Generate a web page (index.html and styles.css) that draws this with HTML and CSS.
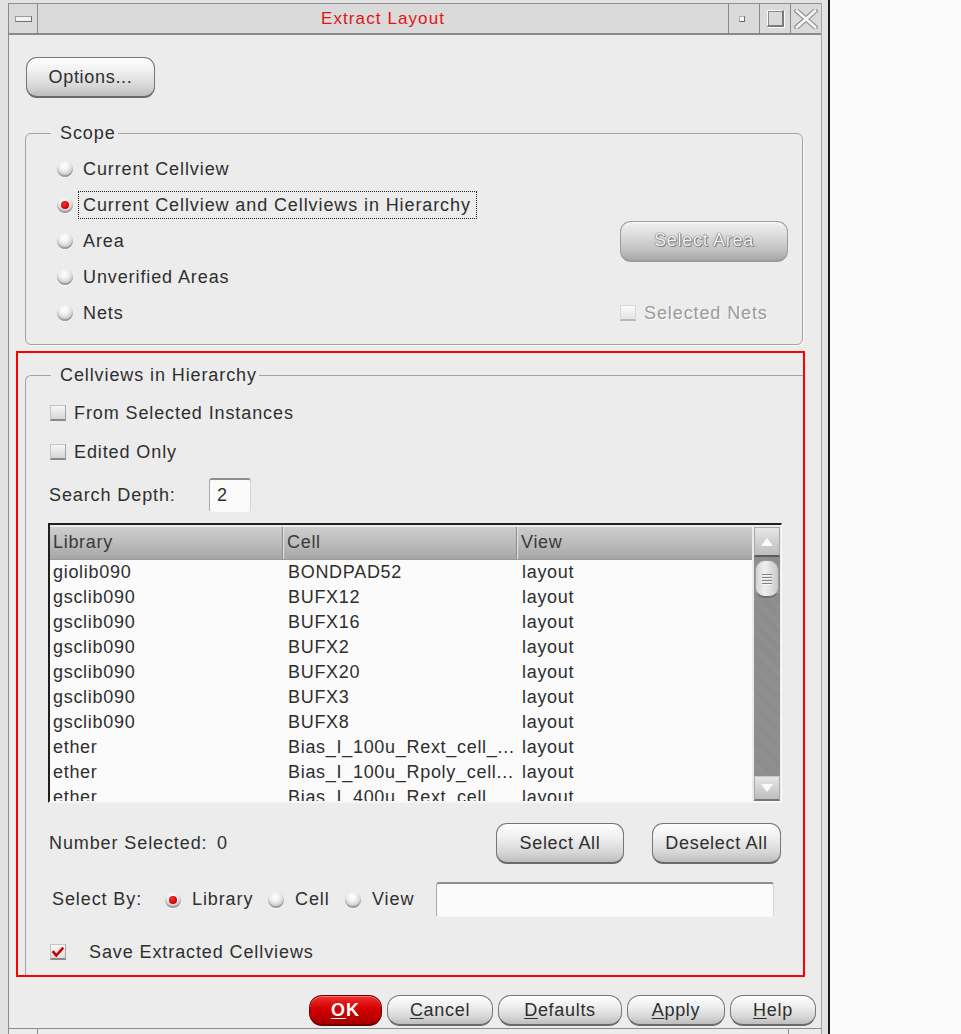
FILE: index.html
```html
<!DOCTYPE html>
<html>
<head>
<meta charset="utf-8">
<title>Extract Layout</title>
<link rel="stylesheet" href="styles.css">
</head>
<body>
<div class="frame">
  <div class="window">
    <div class="titlebar">
      <div class="tb-menu"><span class="tb-menu-bar"></span></div>
      <div class="tb-title">Extract Layout</div>
      <div class="tb-btn"><span class="tb-min"></span></div>
      <div class="tb-btn"><span class="tb-max"></span></div>
      <div class="tb-btn">
        <svg class="tb-x" width="24" height="20" viewBox="0 0 24 20">
          <path d="M3 2 L21 18 M21 2 L3 18" stroke="#8a8a8a" stroke-width="5" stroke-linecap="square" fill="none"/>
          <path d="M3 2 L21 18 M21 2 L3 18" stroke="#f4f4f4" stroke-width="3" stroke-linecap="square" fill="none"/>
        </svg>
      </div>
    </div>

    <div class="content">
      <button class="btn btn-options">Options...</button>

      <fieldset class="group scope">
        <legend>Scope</legend>
        <div class="srow">
          <span class="radio"></span><span class="lbl">Current Cellview</span>
        </div>
        <div class="srow">
          <span class="radio on"></span><span class="lbl focus">Current Cellview and Cellviews in Hierarchy</span>
        </div>
        <div class="srow">
          <span class="radio"></span><span class="lbl">Area</span>
          <div class="sright"><button class="btn btn-disabled btn-area">Select Area</button></div>
        </div>
        <div class="srow">
          <span class="radio"></span><span class="lbl">Unverified Areas</span>
        </div>
        <div class="srow">
          <span class="radio"></span><span class="lbl">Nets</span>
          <div class="sright"><span class="check disabled"></span><span class="dis-text">Selected Nets</span></div>
        </div>
      </fieldset>

      <div class="highlight">
        <fieldset class="group cvh">
          <legend>Cellviews in Hierarchy</legend>
          <div class="crow r1"><span class="check"></span><span class="ctext">From Selected Instances</span></div>
          <div class="crow r2"><span class="check"></span><span class="ctext">Edited Only</span></div>
          <div class="crow r3"><span class="depth-label">Search Depth:</span><span class="field depth">2</span></div>

          <div class="list">
            <div class="lmain">
              <div class="lhead">
                <div class="hcell c1">Library</div>
                <div class="hcell c2">Cell</div>
                <div class="hcell c3">View</div>
              </div>
              <div class="lbody">
                <div class="lrow"><span class="c1">giolib090</span><span class="c2">BONDPAD52</span><span class="c3">layout</span></div>
                <div class="lrow"><span class="c1">gsclib090</span><span class="c2">BUFX12</span><span class="c3">layout</span></div>
                <div class="lrow"><span class="c1">gsclib090</span><span class="c2">BUFX16</span><span class="c3">layout</span></div>
                <div class="lrow"><span class="c1">gsclib090</span><span class="c2">BUFX2</span><span class="c3">layout</span></div>
                <div class="lrow"><span class="c1">gsclib090</span><span class="c2">BUFX20</span><span class="c3">layout</span></div>
                <div class="lrow"><span class="c1">gsclib090</span><span class="c2">BUFX3</span><span class="c3">layout</span></div>
                <div class="lrow"><span class="c1">gsclib090</span><span class="c2">BUFX8</span><span class="c3">layout</span></div>
                <div class="lrow"><span class="c1">ether</span><span class="c2">Bias_I_100u_Rext_cell_...</span><span class="c3">layout</span></div>
                <div class="lrow"><span class="c1">ether</span><span class="c2">Bias_I_100u_Rpoly_cell...</span><span class="c3">layout</span></div>
                <div class="lrow"><span class="c1">ether</span><span class="c2">Bias_I_400u_Rext_cell...</span><span class="c3">layout</span></div>
              </div>
            </div>
            <div class="vscroll">
              <div class="sb-btn sb-up"><svg width="12" height="8" viewBox="0 0 12 8"><path d="M6 0 L12 8 L0 8 Z" fill="#fafafa"/></svg></div>
              <div class="sb-track">
                <div class="sb-thumb"><span></span><span></span><span></span><span></span></div>
              </div>
              <div class="sb-btn sb-down"><svg width="12" height="8" viewBox="0 0 12 8"><path d="M0 0 L12 0 L6 8 Z" fill="#fafafa"/></svg></div>
            </div>
          </div>

          <div class="crow nrow">
            <span class="n-label">Number Selected:</span><span class="n-val">0</span>
            <button class="btn btn-sel">Select All</button>
            <button class="btn btn-desel">Deselect All</button>
          </div>

          <div class="crow sbrow">
            <span class="sb-label">Select By:</span>
            <span class="opt o-lib"><span class="radio on"></span><span class="otext">Library</span></span>
            <span class="opt o-cell"><span class="radio"></span><span class="otext">Cell</span></span>
            <span class="opt o-view"><span class="radio"></span><span class="otext">View</span></span>
            <span class="field sb-field"></span>
          </div>

          <div class="crow saverow">
            <span class="check checked">
              <svg width="16" height="14" viewBox="0 0 16 14"><path d="M2 6 L6 11 L14 2" stroke="#d00000" stroke-width="3" fill="none" stroke-linejoin="miter"/></svg>
            </span>
            <span class="savetext">Save Extracted Cellviews</span>
          </div>
        </fieldset>
      </div>
    </div>

    <div class="footer">
      <button class="btn fbtn ok"><u>O</u>K</button>
      <button class="btn fbtn b-cancel"><u>C</u>ancel</button>
      <button class="btn fbtn b-def"><u>D</u>efaults</button>
      <button class="btn fbtn b-apply"><u>A</u>pply</button>
      <button class="btn fbtn b-help"><u>H</u>elp</button>
    </div>
    <div class="bottomframe"><span class="tick t1"></span><span class="tick t2"></span></div>
  </div>
</div>
</body>
</html>
```

FILE: styles.css
```css
html, body {
  margin: 0;
  padding: 0;
  background: #fbfbfb;
}
body {
  font-family: "Liberation Sans", Arial, sans-serif;
  font-size: 18px;
  color: #2f2f2f;
}

.frame {
  width: 830px;
  height: 1034px;
  box-sizing: border-box;
  padding: 3px 6px 0 8px;
  border-right: 2px solid #1c1c1c;
  background: #e2e2e2;
  overflow: hidden;
  display: flex;
}
.window {
  flex: 1;
  display: flex;
  flex-direction: column;
  border-left: 1px solid #8c8c8c;
  border-right: 1px solid #a4a4a4;
  background: #ececec;
}

/* title bar */
.titlebar {
  height: 29px;
  display: flex;
  border-top: 1px solid #8e8e8e;
  border-bottom: 2px solid #8a8a8a;
  background: #dadada;
}
.tb-menu {
  width: 28px;
  border-right: 1px solid #8a8a8a;
  display: flex;
  align-items: center;
  justify-content: center;
}
.tb-menu-bar {
  width: 15px;
  height: 4px;
  background: #f2f2f2;
  border: 1px solid #9a9a9a;
  border-bottom-color: #6e6e6e;
  border-right-color: #6e6e6e;
}
.tb-title {
  flex: 1;
  text-align: center;
  line-height: 29px;
  color: #e01414;
  font-size: 17px;
  letter-spacing: 1.1px;
}
.tb-btn {
  width: 30px;
  border-left: 1px solid #8a8a8a;
  display: flex;
  align-items: center;
  justify-content: center;
}
.tb-min {
  width: 4px;
  height: 4px;
  margin-left: -4px;
  background: #fafafa;
  border: 1px solid #b0b0b0;
  border-right-color: #6a6a6a;
  border-bottom-color: #6a6a6a;
}
.tb-max {
  width: 14px;
  height: 14px;
  border-top: 1px solid #fafafa;
  border-left: 1px solid #fafafa;
  border-right: 2px solid #7a7a7a;
  border-bottom: 2px solid #7a7a7a;
  box-shadow: 1px 1px 0 #fafafa, inset 1px 1px 0 #8a8a8a;
}

/* content */
.content {
  padding: 22px 18px 0 16px;
}

.btn {
  display: block;
  box-sizing: border-box;
  font-family: "Liberation Sans", Arial, sans-serif;
  font-size: 18px;
  letter-spacing: 0.7px;
  color: #2e2e2e;
  border: 1px solid #767676;
  border-bottom: 2px solid #6a6a6a;
  border-radius: 11px;
  background: linear-gradient(#fefefe 0%, #f0f0f0 35%, #d6d6d6 75%, #bdbdbd 100%);
  box-shadow: inset 0 1px 0 #ffffff;
  padding: 0;
  margin: 0;
}
.btn-options {
  width: 129px;
  height: 41px;
  margin-left: 1px;
}

.group {
  margin: 0;
  border: 1px solid #a2a2a2;
  border-radius: 6px;
  box-shadow: 1px 1px 0 #fbfbfb;
}
.group legend {
  font-size: 18px;
  line-height: 20px;
  letter-spacing: 0.9px;
  color: #2f2f2f;
  padding: 0 2px 0 9px;
}

.scope {
  margin-top: 25px;
  padding: 8px 14px 13px 31px;
}
.scope legend {
  margin-left: -6px;
}
.srow {
  height: 36px;
  display: flex;
  align-items: center;
}

.radio {
  width: 16px;
  height: 16px;
  flex: none;
  border-radius: 50%;
  background: radial-gradient(circle at 45% 30%, #ffffff 0%, #f2f2f2 30%, #cdcdcd 65%, #9a9a9a 100%);
  box-shadow: inset 0 -2px 1px rgba(0,0,0,0.22), 0 1px 0 #fafafa;
  display: flex;
  align-items: center;
  justify-content: center;
}
.radio.on::after {
  content: "";
  width: 8px;
  height: 8px;
  border-radius: 50%;
  background: radial-gradient(circle at 40% 35%, #ff3030 0%, #d80000 60%, #a00000 100%);
}

.lbl {
  margin-left: 5px;
  padding: 3px 5px 3px 4px;
  line-height: 20px;
  border: 1px solid transparent;
  letter-spacing: 0.9px;
  white-space: nowrap;
}
.lbl.focus {
  border: 1px dotted #1e1e1e;
}
.sright {
  margin-left: auto;
  width: 168px;
  display: flex;
  align-items: center;
}
.btn-area {
  width: 168px;
  height: 41px;
}
.btn-disabled {
  color: #f4f4f4;
  border-color: #9c9c9c;
  background: linear-gradient(#f0f0f0 0%, #dcdcdc 35%, #c0c0c0 75%, #a9a9a9 100%);
  text-shadow: 0 0 1px #555, 0 0 1px #555, 1px 1px 0 #8a8a8a;
}

.check {
  width: 16px;
  height: 16px;
  flex: none;
  box-sizing: border-box;
  background: linear-gradient(#f6f6f6, #d6d6d6);
  border: 1px solid #c4c4c4;
  border-bottom: 2px solid #8a8a8a;
  border-right: 1px solid #a4a4a4;
  display: flex;
  align-items: center;
  justify-content: center;
}
.check.disabled {
  background: linear-gradient(#fbfbfb, #e2e2e2);
  border-color: #d8d8d8;
  border-bottom-color: #b8b8b8;
}
.dis-text {
  margin-left: 8px;
  color: #9a9a9a;
  letter-spacing: 0.9px;
  text-shadow: 1px 1px 0 #ffffff;
}

/* red highlight */
.highlight {
  margin: 6px -2px 0 -9px;
  border: 2px solid #ff0000;
  padding: 12px 0 0 7px;
}
.cvh {
  padding: 9px 22px 7px 24px;
  border-right: none;
  border-bottom: none;
  border-radius: 6px 0 0 0;
  box-shadow: none;
}
.cvh legend {
  margin-left: 1px;
}
.crow {
  display: flex;
  align-items: center;
  letter-spacing: 0.9px;
}
.r1 { height: 38px; }
.r2 { height: 40px; }
.r3 { height: 34px; margin-top: 6px; }
.ctext { margin-left: 8px; }
.depth-label {
  width: 160px;
  margin-left: -1px;
}
.field {
  box-sizing: border-box;
  background: #fbfbfb;
  border-top: 2px solid #8e8e8e;
  border-left: 1px solid #a8a8a8;
  border-right: 1px solid #d4d4d4;
  border-bottom: 1px solid #f8f8f8;
  border-radius: 3px;
}
.depth {
  width: 42px;
  height: 34px;
  line-height: 31px;
  padding-left: 7px;
}

/* list */
.list {
  margin: 11px -1px 0 -2px;
  height: 280px;
  box-sizing: border-box;
  border-top: 2px solid #1f1f1f;
  border-left: 2px solid #1f1f1f;
  border-right: 1px solid #fafafa;
  border-bottom: 2px solid #f6f6f6;
  padding-top: 2px;
  display: flex;
  gap: 2px;
  background: #ececec;
}
.lmain {
  width: 702px;
  display: flex;
  flex-direction: column;
  background: #fbfbfb;
}
.lhead {
  height: 33px;
  flex: none;
  display: flex;
  background: linear-gradient(#cdcdcd 0%, #bcbcbc 50%, #a6a6a6 100%);
  border-bottom: 1px solid #9a9a9a;
  box-sizing: border-box;
}
.hcell {
  box-sizing: border-box;
  line-height: 30px;
  color: #3a3a3a;
  letter-spacing: 0.7px;
  border-right: 1px solid #8c8c8c;
  box-shadow: 1px 0 0 #e4e4e4;
}
.lhead .c1 { width: 233px; padding-left: 3px; }
.lhead .c2 { width: 234px; padding-left: 4px; }
.lhead .c3 { width: 234px; padding-left: 4px; border-right: none; box-shadow: none; }
.lbody {
  flex: 1;
  overflow: hidden;
}
.lrow {
  height: 25px;
  display: flex;
  line-height: 25px;
  color: #2e2e2e;
  letter-spacing: 0.7px;
  white-space: nowrap;
}
.lrow span { box-sizing: border-box; overflow: hidden; }
.lrow .c1 { width: 234px; padding-left: 3px; }
.lrow .c2 { width: 234px; padding-left: 4px; }
.lrow .c3 { width: 234px; padding-left: 4px; }

.vscroll {
  width: 26px;
  display: flex;
  flex-direction: column;
  background: #8c8c8c;
}
.sb-btn {
  flex: none;
  display: flex;
  align-items: center;
  justify-content: center;
  background: linear-gradient(#e6e6e6, #bdbdbd);
  border: 1px solid #a8a8a8;
  box-sizing: border-box;
}
.sb-up { height: 30px; border-bottom: 2px solid #5c5c5c; }
.sb-down { height: 25px; border-top: 1px solid #c8c8c8; border-bottom: 2px solid #787878; }
.sb-track {
  flex: 1;
  padding-top: 3px;
  background: repeating-linear-gradient(45deg, #8a8a8a 0 1px, #929292 1px 2px);
}
.sb-thumb {
  width: 24px;
  height: 38px;
  margin-left: 1px;
  box-sizing: border-box;
  border-radius: 10px;
  background: linear-gradient(90deg, #d4d4d4, #efefef 40%, #c8c8c8);
  border: 1px solid #9a9a9a;
  border-bottom: 2px solid #6e6e6e;
  display: flex;
  flex-direction: column;
  align-items: center;
  justify-content: center;
  gap: 2px;
}
.sb-thumb span {
  width: 10px;
  height: 1px;
  background: #808080;
  box-shadow: 0 1px 0 #f4f4f4;
}

/* number row */
.nrow {
  height: 41px;
  margin-top: 20px;
}
.n-label { width: 168px; margin-left: -1px; }
.n-val { flex: 1; }
.btn-sel { width: 128px; height: 41px; }
.btn-desel { width: 129px; height: 41px; margin-left: 28px; }

/* select by row */
.sbrow {
  height: 35px;
  margin-top: 18px;
}
.sb-label { width: 113px; margin-left: 2px; }
.opt { display: flex; align-items: center; }
.otext { margin-left: 11px; }
.o-lib { width: 103px; }
.o-cell { width: 77px; }
.o-view { width: 91px; }
.sb-field {
  width: 338px;
  height: 35px;
}

/* save row */
.saverow {
  height: 32px;
  margin-top: 19px;
}
.check.checked {
  background: linear-gradient(#f8f8f8, #dedede);
}
.savetext { margin-left: 23px; }

/* footer */
.footer {
  display: flex;
  justify-content: flex-end;
  gap: 5px;
  padding-right: 5px;
  margin-top: 18px;
}
.fbtn {
  height: 31px;
  border-radius: 13px;
  font-size: 18px;
}
.fbtn u { text-underline-offset: 2px; }
.ok {
  width: 73px;
  color: #ffffff;
  font-weight: bold;
  letter-spacing: 1px;
  border-color: #6a0000;
  background: linear-gradient(#f03030 0%, #d40000 45%, #a80000 100%);
  box-shadow: inset 0 1px 0 #ff7070;
}
.b-cancel { width: 106px; }
.b-def { width: 124px; }
.b-apply { width: 98px; }
.b-help { width: 86px; }

.bottomframe {
  margin-top: 2px;
  border-top: 1px solid #8a8a8a;
  height: 8px;
  display: flex;
}
.tick {
  width: 1px;
  height: 8px;
  background: #8a8a8a;
}
.t1 { margin-left: 28px; }
.t2 { margin-left: 750px; }
```
